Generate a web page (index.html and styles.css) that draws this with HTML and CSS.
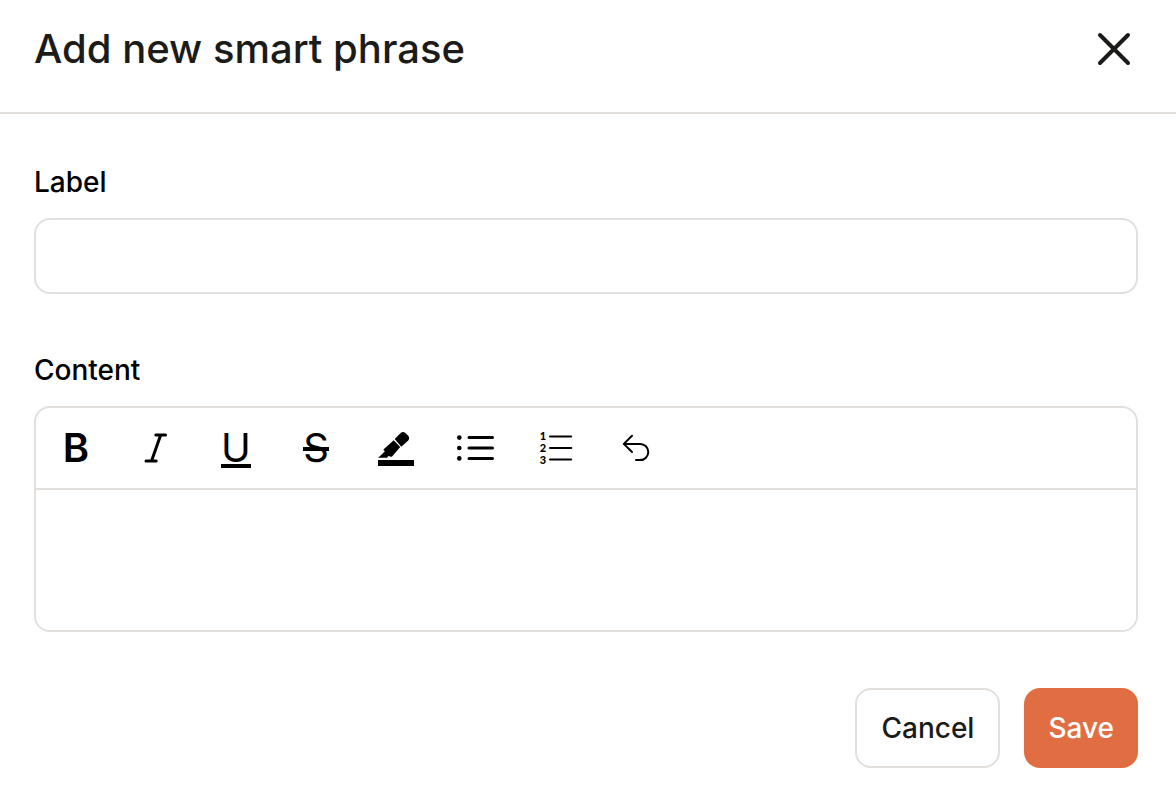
FILE: index.html
```html
<!DOCTYPE html>
<html lang="en">
<head>
    <meta charset="UTF-8">
    <meta name="viewport" content="width=device-width, initial-scale=1.0">
    <title>Add new smart phrase</title>
    <link rel="stylesheet" href="styles.css">
</head>
<body>
    <form class="dialog" role="dialog" aria-labelledby="dialogTitle">
        <header class="dialog-header">
            <h1 id="dialogTitle">Add new smart phrase</h1>
            <button type="button" class="icon-button close" aria-label="Close">
                <svg viewBox="0 0 48 48">
                    <path d="M10 10L38 38M38 10L10 38" stroke-width="4"/>
                </svg>
            </button>
        </header>

        <div class="dialog-body">
            <div class="field">
                <label for="labelInput">Label</label>
                <input type="text" id="labelInput" class="text-input">
            </div>

            <div class="field">
                <label for="contentInput">Content</label>
                <div class="editor">
                    <div class="toolbar" role="toolbar" aria-label="Formatting">
                        <button type="button" class="icon-button" aria-label="Bold">
                            <svg viewBox="0 0 40 40">
                                <text class="letter semibold" x="20" y="34">B</text>
                            </svg>
                        </button>
                        <button type="button" class="icon-button" aria-label="Italic">
                            <svg viewBox="0 0 40 40">
                                <path d="M19.8 7H29.5M10 33H20.2M24.7 7L15.5 33" stroke-width="3"/>
                            </svg>
                        </button>
                        <button type="button" class="icon-button" aria-label="Underline">
                            <svg viewBox="0 0 40 40">
                                <text class="letter" x="20" y="34">U</text>
                                <rect class="solid" x="5" y="36" width="30" height="4"/>
                            </svg>
                        </button>
                        <button type="button" class="icon-button" aria-label="Strikethrough">
                            <svg viewBox="0 0 40 40">
                                <text class="letter" x="20" y="34">S</text>
                                <rect class="solid" x="7" y="19" width="26" height="4"/>
                            </svg>
                        </button>
                        <button type="button" class="icon-button" aria-label="Highlight">
                            <svg viewBox="0 0 40 40">
                                <path class="solid" d="M18.7 11L24.6 5Q27 2.8 29.4 5L32.2 7.8Q34.2 10.2 32.2 12.4L25.3 18.8Z"/>
                                <path class="solid" d="M17.7 12.2L24.2 19L16.3 28.2Q15.4 29.2 14.2 28.6L12.6 27.9L10.8 29.8H2.2L8.8 23.4L7.4 21.5Z"/>
                                <rect class="solid" x="2" y="32" width="36" height="6"/>
                            </svg>
                        </button>
                        <button type="button" class="icon-button" aria-label="Bulleted list">
                            <svg viewBox="0 0 40 40">
                                <path d="M13 9.5H36.5M13 20H36.5M13 30.5H36.5" stroke-width="3"/>
                                <circle class="solid" cx="3.3" cy="9.6" r="2.3"/>
                                <circle class="solid" cx="3.3" cy="20" r="2.3"/>
                                <circle class="solid" cx="3.3" cy="30.4" r="2.3"/>
                            </svg>
                        </button>
                        <button type="button" class="icon-button" aria-label="Numbered list">
                            <svg viewBox="0 0 40 40">
                                <path d="M14 8.6H35.2M14 20H35.2M14 31.4H35.2" stroke-width="2"/>
                                <text class="digit" x="7" y="12">1</text>
                                <text class="digit" x="7" y="24">2</text>
                                <text class="digit" x="7" y="36">3</text>
                            </svg>
                        </button>
                        <button type="button" class="icon-button" aria-label="Undo">
                            <svg viewBox="0 0 40 40">
                                <path d="M16 7.8L7.8 15.9L16 24M7.8 15.9H24.2A8.1 8.1 0 0 1 24.2 32.1H20" stroke-width="2"/>
                            </svg>
                        </button>
                    </div>
                    <textarea id="contentInput" class="editor-input"></textarea>
                </div>
            </div>

            <footer class="actions">
                <button type="button" class="button">Cancel</button>
                <button type="submit" class="button primary">Save</button>
            </footer>
        </div>
    </form>
</body>
</html>
```

FILE: styles.css
```css
* {
    box-sizing: border-box;
}
body {
    margin: 0;
    background: #fff;
    color: #000;
    font-family: Inter, "Liberation Sans", sans-serif;
    font-size: 28px;
    font-weight: 500;
    line-height: 40px;
}
.dialog-header {
    display: flex;
    align-items: center;
    justify-content: space-between;
    padding: 25px 38px 39px 34px;
    border-bottom: 2px solid #e3dfdc;
    color: #1b1b19;
}
h1 {
    margin: 0;
    font-size: 40px;
    font-weight: 500;
    line-height: 48px;
}
.dialog-body {
    display: flex;
    flex-direction: column;
    gap: 56px;
    padding: 48px 38px 24px 34px;
}
.field {
    display: flex;
    flex-direction: column;
    gap: 16px;
}
.text-input {
    width: 100%;
    height: 76px;
    padding: 0 24px;
    border: 2px solid #e3dfdc;
    border-radius: 16px;
    background: #fff;
    font: inherit;
}
.editor {
    border: 2px solid #e3dfdc;
    border-radius: 16px;
    overflow: hidden;
}
.toolbar {
    display: flex;
    gap: 40px;
    padding: 20px;
    border-bottom: 2px solid #e3dfdc;
}
.editor-input {
    display: block;
    width: 100%;
    height: 140px;
    padding: 20px 24px;
    border: 0;
    background: #fff;
    font: inherit;
    resize: none;
}
.icon-button {
    width: 40px;
    height: 40px;
    padding: 0;
    border: 0;
    background: none;
    color: inherit;
    font: inherit;
    cursor: pointer;
}
.close {
    width: 48px;
    height: 48px;
}
svg {
    display: block;
    width: 100%;
    height: 100%;
    overflow: visible;
    fill: none;
    stroke: currentColor;
    stroke-linecap: round;
    stroke-linejoin: round;
}
.solid {
    fill: currentColor;
    stroke: none;
}
.letter {
    fill: currentColor;
    stroke: none;
    font-size: 40px;
    font-weight: 400;
    text-anchor: middle;
}
.semibold {
    font-weight: 600;
}
.digit {
    fill: currentColor;
    stroke: none;
    font-family: Lato, sans-serif;
    font-size: 11px;
    font-weight: 900;
    text-anchor: middle;
}
.actions {
    display: flex;
    justify-content: flex-end;
    gap: 24px;
}
.button {
    height: 80px;
    padding: 0 24px;
    border: 2px solid #e3dfdc;
    border-radius: 16px;
    background: #fff;
    color: #1b1b19;
    font: inherit;
    cursor: pointer;
}
.primary {
    border: 0;
    background: #e16e43;
    color: #fff;
}
```
